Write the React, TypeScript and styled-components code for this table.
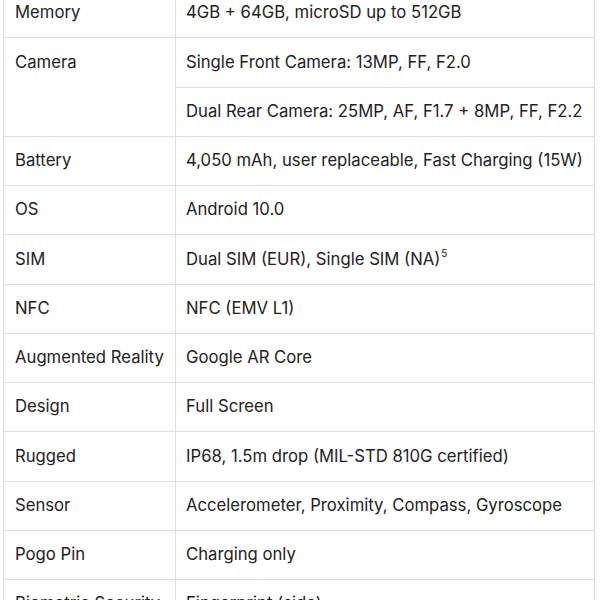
import React from "react";
import styled, { createGlobalStyle } from "styled-components";

const GlobalStyle = createGlobalStyle`
  html, body {
    margin: 0;
    padding: 0;
    background: #ffffff;
    overflow: hidden;
  }
`;

const Page = styled.div`
  padding: 0 5px 0 3px;
  margin-top: -12px;
  font-family: Inter, "Noto Sans", sans-serif;
`;

const Table = styled.table`
  width: 592px;
  table-layout: fixed;
  border-collapse: collapse;
  color: #222222;
  font-size: 16.7px;
  line-height: 1.4;
`;

const LabelCol = styled.col`
  width: 172px;
`;

const Cell = styled.td<{ label?: boolean }>`
  border: 1px solid #dedede;
  padding: 12.45px 8px 12.45px ${(props) => (props.label ? "11px" : "10px")};
  vertical-align: top;
  text-align: left;
  white-space: nowrap;
  overflow: visible;
`;

const Sup = styled.sup`
  font-size: 10px;
  line-height: 0;
  vertical-align: 8px;
  margin-left: 1px;
`;

type Spec = { label: string; values: React.ReactNode[] };

const specs: Spec[] = [
  { label: "Memory", values: ["4GB + 64GB, microSD up to 512GB"] },
  {
    label: "Camera",
    values: [
      "Single Front Camera: 13MP, FF, F2.0",
      "Dual Rear Camera: 25MP, AF, F1.7 + 8MP, FF, F2.2",
    ],
  },
  { label: "Battery", values: ["4,050 mAh, user replaceable, Fast Charging (15W)"] },
  { label: "OS", values: ["Android 10.0"] },
  {
    label: "SIM",
    values: [
      <>
        Dual SIM (EUR), Single SIM (NA)<Sup>5</Sup>
      </>,
    ],
  },
  { label: "NFC", values: ["NFC (EMV L1)"] },
  { label: "Augmented Reality", values: ["Google AR Core"] },
  { label: "Design", values: ["Full Screen"] },
  { label: "Rugged", values: ["IP68, 1.5m drop (MIL-STD 810G certified)"] },
  { label: "Sensor", values: ["Accelerometer, Proximity, Compass, Gyroscope"] },
  { label: "Pogo Pin", values: ["Charging only"] },
  { label: "Biometric Security", values: ["Fingerprint (side)"] },
];

export default function App() {
  return (
    <>
      <GlobalStyle />
      <Page>
        <Table>
          <colgroup>
            <LabelCol />
            <col />
          </colgroup>
          <tbody>
            {specs.map((spec) =>
              spec.values.map((value, i) => (
                <tr key={`${spec.label}-${i}`}>
                  {i === 0 && (
                    <Cell label rowSpan={spec.values.length}>
                      {spec.label}
                    </Cell>
                  )}
                  <Cell>{value}</Cell>
                </tr>
              ))
            )}
          </tbody>
        </Table>
      </Page>
    </>
  );
}
